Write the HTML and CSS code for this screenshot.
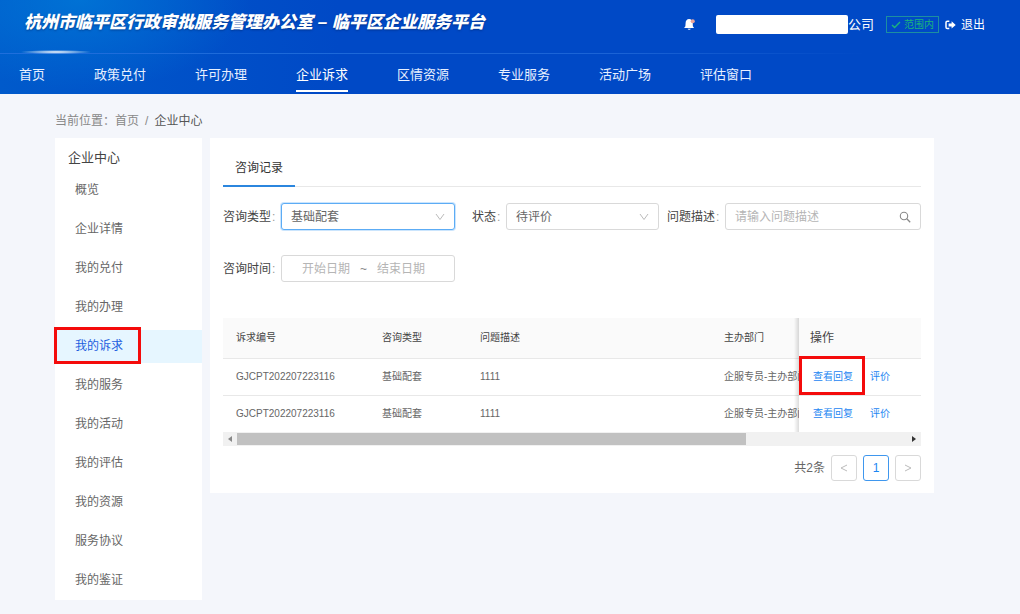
FILE: index.html
```html
<!DOCTYPE html>
<html lang="zh-CN">
<head>
<meta charset="utf-8">
<title>临平区企业服务平台</title>
<link rel="stylesheet" href="styles.css">
</head>
<body>
<header class="header">
  <div class="topbar">
    <h1 class="brand">杭州市临平区行政审批服务管理办公室 – 临平区企业服务平台</h1>
    <div class="account">
      <button class="bell" type="button" aria-label="消息">
        <svg width="13" height="13" viewBox="0 0 12 12"><path d="M5.6 1C3.6 1.1 2.5 2.6 2.4 4.5L2.2 7.6 1 9.3h9.2L9.1 7.6 9 4.5C8.8 2.6 7.7 1.1 5.6 1zM4.3 10h2.8c-.3 1.2-2.4 1.2-2.8 0z" fill="#fff"/><circle cx="9" cy="3" r="1.9" fill="#e8a49c"/></svg>
      </button>
      <span class="company"><span class="mask"></span>公司</span>
      <span class="tag"><svg width="10" height="8" viewBox="0 0 10 8"><path d="M1 4l2.6 2.6L9 1" fill="none" stroke="currentColor" stroke-width="1.4"/></svg>范围内</span>
      <a class="logout" href="#"><svg width="11" height="10" viewBox="0 0 11 10"><path d="M4.3 1.2H2.4Q1 1.2 1 2.6v4.6q0 1.4 1.4 1.4h1.9" fill="none" stroke="#fff" stroke-width="1.5"/><path d="M3.6 3.5h3V1.2L10.7 5 6.6 8.6V6.4h-3z" fill="#fff"/></svg>退出</a>
    </div>
  </div>
  <nav class="nav">
    <a href="#">首页</a>
    <a href="#">政策兑付</a>
    <a href="#">许可办理</a>
    <a href="#" class="current">企业诉求</a>
    <a href="#">区情资源</a>
    <a href="#">专业服务</a>
    <a href="#">活动广场</a>
    <a href="#">评估窗口</a>
  </nav>
</header>

<div class="page">
  <div class="crumbs"><span>当前位置：</span><a href="#">首页</a><span>/</span><b>企业中心</b></div>
  <div class="columns">
    <aside class="sidebar">
      <h2>企业中心</h2>
      <ul>
        <li><a href="#">概览</a></li>
        <li><a href="#">企业详情</a></li>
        <li><a href="#">我的兑付</a></li>
        <li><a href="#">我的办理</a></li>
        <li class="active"><a href="#">我的诉求</a><span class="mark mark-side"></span></li>
        <li><a href="#">我的服务</a></li>
        <li><a href="#">我的活动</a></li>
        <li><a href="#">我的评估</a></li>
        <li><a href="#">我的资源</a></li>
        <li><a href="#">服务协议</a></li>
        <li><a href="#">我的鉴证</a></li>
      </ul>
    </aside>

    <main class="card">
      <div class="tabs"><button type="button" class="tab">咨询记录</button></div>

      <form class="filters">
        <div class="field">
          <label for="type">咨询类型<i>:</i></label>
          <div class="control focused">
            <select id="type"><option>基础配套</option></select>
            <svg class="chevron" width="10" height="8" viewBox="0 0 10 8"><path d="M1 1l4 5.5L9 1" fill="none" stroke="#bbb"/></svg>
          </div>
        </div>
        <div class="field field-status">
          <label for="status">状态<i>:</i></label>
          <div class="control">
            <select id="status"><option>待评价</option></select>
            <svg class="chevron" width="10" height="8" viewBox="0 0 10 8"><path d="M1 1l4 5.5L9 1" fill="none" stroke="#bbb"/></svg>
          </div>
        </div>
        <div class="field field-desc">
          <label for="desc">问题描述<i>:</i></label>
          <div class="control">
            <input id="desc" type="text" placeholder="请输入问题描述">
            <svg class="search" width="12" height="12" viewBox="0 0 12 12"><circle cx="5" cy="5" r="3.7" fill="none" stroke="#888" stroke-width="1.1"/><path d="M7.8 7.8l3.4 3.4" stroke="#888" stroke-width="1.3"/></svg>
          </div>
        </div>
        <div class="field">
          <label for="start">咨询时间<i>:</i></label>
          <div class="control range">
            <input id="start" type="text" placeholder="开始日期">
            <span>~</span>
            <input type="text" placeholder="结束日期" aria-label="结束日期">
          </div>
        </div>
      </form>

      <div class="table-wrap">
        <table>
          <colgroup><col class="c-no"><col class="c-type"><col class="c-desc"><col class="c-dept"><col class="c-act"></colgroup>
          <thead>
            <tr><th>诉求编号</th><th>咨询类型</th><th>问题描述</th><th>主办部门</th><th class="fixed">操作</th></tr>
          </thead>
          <tbody>
            <tr><td>GJCPT202207223116</td><td>基础配套</td><td>1111</td><td>企服专员-主办部门</td><td class="fixed"><div class="actions"><a href="#">查看回复</a><a href="#">评价</a></div><span class="mark mark-cell"></span></td></tr>
            <tr><td>GJCPT202207223116</td><td>基础配套</td><td>1111</td><td>企服专员-主办部门</td><td class="fixed"><div class="actions"><a href="#">查看回复</a><a href="#">评价</a></div></td></tr>
          </tbody>
        </table>
      </div>
      <div class="scrollbar">
        <button type="button" aria-label="向左"><svg width="4" height="6" viewBox="0 0 4 6"><path d="M4 0v6L0 3z" fill="#888"/></svg></button>
        <div class="track"><div class="thumb"></div></div>
        <button type="button" aria-label="向右"><svg width="4" height="6" viewBox="0 0 4 6"><path d="M0 0v6l4-3z" fill="#333"/></svg></button>
      </div>

      <div class="pager">
        <span>共2条</span>
        <button type="button" aria-label="上一页"><svg width="8" height="8" viewBox="0 0 8 8"><path d="M7 1L1 4l6 3" fill="none" stroke="#bbb"/></svg></button>
        <button type="button" class="on">1</button>
        <button type="button" aria-label="下一页"><svg width="8" height="8" viewBox="0 0 8 8"><path d="M1 1l6 3-6 3" fill="none" stroke="#bbb"/></svg></button>
      </div>
    </main>
  </div>
</div>
</body>
</html>
```

FILE: styles.css
```css
* { box-sizing: border-box; }
body {
  margin: 0;
  background: #f4f6fb;
  color: #666;
  font: 12px/18px "Liberation Sans", "Noto Sans CJK SC", sans-serif;
}
a { color: inherit; text-decoration: none; }
button, input, select { font: inherit; color: inherit; }
svg { display: block; flex: none; }

/* header */
.header {
  color: #fff;
  background:
    radial-gradient(ellipse 170px 90px at 80px 0, rgba(0, 132, 220, .6), transparent),
    linear-gradient(90deg, #005acb, #0049c6 340px);
}
.topbar {
  display: flex;
  align-items: center;
  justify-content: space-between;
  height: 54px;
  padding: 0 35px 5px 24px;
  background:
    radial-gradient(ellipse 36px 2px at 56px 52px, #fff, transparent),
    linear-gradient(90deg, #1f6fdc, #1b63d6 60%, transparent 85%) 0 100% / 100% 1px no-repeat;
}
.brand {
  margin: 0 0 4px;
  font-size: 17px;
  line-height: 24px;
  font-weight: 900;
  font-style: italic;
  white-space: nowrap;
  text-shadow: 0 1px 2px rgba(0, 30, 90, .5);
}
.account { display: flex; align-items: center; }
.bell { padding: 0; border: 0; background: none; margin-right: 20px; }
.company { display: flex; align-items: center; font-size: 13px; }
.mask { width: 132px; height: 19px; border-radius: 2px; background: #fff; }
.tag {
  display: flex;
  align-items: center;
  gap: 3px;
  height: 17px;
  margin: 0 6px 0 12px;
  padding: 0 4px;
  border: 1px solid #1c8fa0;
  font-size: 10px;
  color: #1cb47c;
}
.logout { display: flex; align-items: center; gap: 5px; }
.nav { display: flex; gap: 49px; height: 40px; padding: 0 19px; font-size: 13px; }
.nav a { height: 38px; line-height: 42px; color: #e8f0ff; white-space: nowrap; }
.nav .current { color: #fff; border-bottom: 2px solid #fff; }

/* page */
.page { padding: 16px 86px 14px 55px; }
.crumbs { display: flex; gap: 6px; line-height: 22px; padding-bottom: 6px; color: #888; }
.crumbs b { font-weight: 400; color: #555; }
.crumbs span:first-child { margin-right: -6px; }
.columns { display: flex; align-items: flex-start; gap: 8px; }

.sidebar { flex: 0 0 147px; padding: 3px 0; background: #fff; }
.sidebar h2 { margin: 0; padding-left: 13px; font-size: 13px; line-height: 33px; font-weight: 400; color: #444; }
.sidebar ul { display: grid; gap: 6px; margin: 0; padding: 0; list-style: none; }
.sidebar li { position: relative; padding-left: 20px; line-height: 33px; }
.sidebar a { display: block; }
.sidebar .active { background: #e6f6ff; color: #1d5fe0; }

.mark { position: absolute; border: 3px solid #f40b0b; pointer-events: none; }
.mark-side { left: -1px; top: -3px; bottom: -1px; width: 87px; }
.mark-cell { left: 0; top: -3px; bottom: 0; width: 66px; }

.card { flex: 1; min-width: 0; padding: 14px 13px 12px; background: #fff; }
.tabs { display: flex; border-bottom: 1px solid #e8e8e8; }
.tab {
  margin-bottom: -1px;
  padding: 0 12px;
  border: 0;
  border-bottom: 2px solid #2b86de;
  background: none;
  line-height: 33px;
  color: #333;
}

/* filters */
.filters {
  display: grid;
  grid-template-columns: 232fr 204fr 262fr;
  row-gap: 25px;
  padding: 16px 0 36px;
}
.field { display: flex; align-items: center; }
.field label { flex: 0 0 58px; color: #444; white-space: nowrap; }
.field i { margin-left: 1px; font-style: normal; color: #999; }
.field-status { padding-left: 17px; }
.field-status label { flex-basis: 34px; }
.field-desc { padding-left: 8px; }
.control {
  display: flex;
  align-items: center;
  flex: 1;
  min-width: 0;
  height: 27px;
  border: 1px solid #d9d9d9;
  border-radius: 3px;
  background: #fff;
}
.focused { border-color: #5cacf5; box-shadow: 0 0 0 1px #cbe5fd; }
.control select, .control input {
  flex: 1;
  min-width: 0;
  height: 25px;
  padding: 0 9px;
  border: 0;
  outline: 0;
  background: none;
  appearance: none;
}
.control ::placeholder { color: #b5b5b5; }
.chevron, .search { margin-right: 9px; }
.range { padding: 0 29px 0 20px; }
.control.range input { flex: 0 0 48px; padding: 0; }
.range span { flex: 1; text-align: center; color: #888; }

/* table */
.table-wrap { overflow-x: auto; scrollbar-width: none; font-size: 10px; }
table { width: 918px; table-layout: fixed; border-spacing: 0; }
.c-no { width: 146px; }
.c-type { width: 98px; }
.c-desc { width: 244px; }
.c-act { width: 122px; }
th, td { padding: 0 13px; text-align: left; border-bottom: 1px solid #e8e8e8; white-space: nowrap; }
th { height: 41px; background: #fafafa; font-weight: 400; color: #444; }
td { height: 37px; background: #fff; }
tbody tr:last-child td { height: 36px; border-bottom: 0; }
.fixed { position: sticky; right: 0; z-index: 1; padding-left: 11px; }
.fixed::before {
  content: "";
  position: absolute;
  top: 0;
  bottom: -1px;
  left: -5px;
  width: 5px;
  background: linear-gradient(90deg, transparent, rgba(0, 0, 0, .14));
}
th.fixed { font-size: 12px; }
td.fixed { padding-left: 14px; color: #1c86f2; }
tbody tr:first-child .fixed { z-index: 2; }
.actions { display: flex; gap: 17px; }

.scrollbar { display: flex; height: 14px; background: #f1f1f1; }
.scrollbar button { display: grid; place-items: center; width: 14px; padding: 0; border: 0; background: none; }
.track { flex: 1; padding: 1px 0; }
.thumb { width: 76%; height: 12px; background: #c1c1c1; }

.pager { display: flex; align-items: center; justify-content: flex-end; gap: 6px; padding-top: 9px; }
.pager button {
  display: grid;
  place-items: center;
  width: 26px;
  height: 26px;
  padding: 0;
  border: 1px solid #d9d9d9;
  border-radius: 3px;
  background: #fff;
}
.pager .on { border-color: #3f97ee; color: #1c86f2; }
```
